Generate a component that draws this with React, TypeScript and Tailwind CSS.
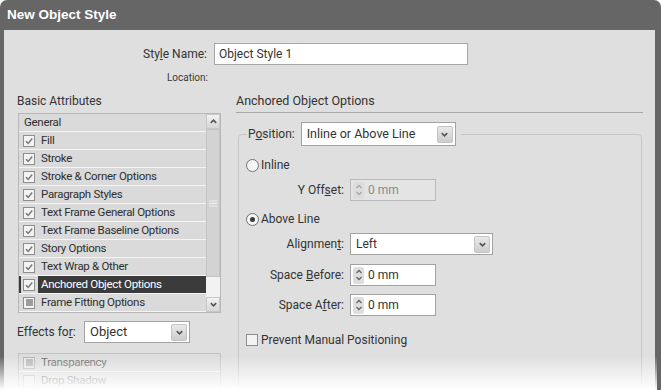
import type { ReactNode } from "react";

type CheckState = "on" | "off" | "mixed";

function Check({ state, dim = false }: { state: CheckState; dim?: boolean }) {
  return (
    <span
      className={`flex h-[12px] w-[12px] shrink-0 items-center justify-center border ${
        dim ? "border-[#b4b4b4] bg-[#e6e6e6]" : "border-[#8e8e8e] bg-[#f3f3f3]"
      }`}
    >
      {state === "on" && (
        <svg viewBox="0 0 10 10" className="h-[10px] w-[10px]">
          <path d="M2 5.2 L4.2 7.4 L8.2 2.6" fill="none" stroke="#7c7c7c" strokeWidth="1.6" />
        </svg>
      )}
      {state === "mixed" && <span className={`h-[7px] w-[7px] ${dim ? "bg-[#b8b8b8]" : "bg-[#9c9c9c]"}`} />}
    </span>
  );
}

function Radio({ on }: { on: boolean }) {
  return (
    <span className="flex h-[13px] w-[13px] shrink-0 items-center justify-center rounded-full border border-[#707070] bg-[#f4f4f4]">
      {on && <span className="h-[5px] w-[5px] rounded-full bg-[#3a3a3a]" />}
    </span>
  );
}

function Chevron({ up = false }: { up?: boolean }) {
  return (
    <svg viewBox="0 0 10 10" className="h-[9px] w-[9px]">
      <path
        d={up ? "M2 6.5 L5 3.5 L8 6.5" : "M2 3.5 L5 6.5 L8 3.5"}
        fill="none"
        stroke="#555"
        strokeWidth="1.8"
      />
    </svg>
  );
}

function Dropdown({ value, className }: { value: string; className: string }) {
  return (
    <div className={`flex items-center border border-[#a2a2a2] bg-white pl-[5px] pr-[2px] ${className}`}>
      <span className="flex-1 truncate">{value}</span>
      <span className="flex h-[17px] w-[16px] items-center justify-center rounded-[2px] border border-[#c4c4c4] bg-linear-to-b from-[#e9e9e9] to-[#cdcdcd]">
        <Chevron />
      </span>
    </div>
  );
}

function Spinner({ value, disabled = false }: { value: string; disabled?: boolean }) {
  return (
    <div
      className={`flex h-[22px] w-[86px] items-center border ${
        disabled ? "border-[#b9b9b9] bg-[#e4e4e4] text-[#8a8a8a]" : "border-[#a2a2a2] bg-white"
      }`}
    >
      <span
        className={`ml-[2px] flex h-[17px] w-[11px] flex-col items-center justify-center rounded-[2px] ${
          disabled ? "bg-[#dcdcdc]" : "bg-[#dedede]"
        }`}
      >
        <svg viewBox="0 0 8 14" className="h-[14px] w-[8px]">
          <path d="M1.5 5 L4 2.5 L6.5 5" fill="none" stroke={disabled ? "#aaa" : "#666"} strokeWidth="1.3" />
          <path d="M1.5 9 L4 11.5 L6.5 9" fill="none" stroke={disabled ? "#aaa" : "#666"} strokeWidth="1.3" />
        </svg>
      </span>
      <span className="pl-[4px]">{value}</span>
    </div>
  );
}

function Field({ label, children }: { label: ReactNode; children: ReactNode }) {
  return (
    <div className="flex items-center gap-[6px]">
      <span className="w-[98px] text-right">{label}</span>
      {children}
    </div>
  );
}

const rows: { name: string; state: CheckState | null }[] = [
  { name: "General", state: null },
  { name: "Fill", state: "on" },
  { name: "Stroke", state: "on" },
  { name: "Stroke & Corner Options", state: "on" },
  { name: "Paragraph Styles", state: "on" },
  { name: "Text Frame General Options", state: "on" },
  { name: "Text Frame Baseline Options", state: "on" },
  { name: "Story Options", state: "on" },
  { name: "Text Wrap & Other", state: "on" },
  { name: "Anchored Object Options", state: "on" },
  { name: "Frame Fitting Options", state: "mixed" },
];

export default function App() {
  return (
    <div className="relative h-[390px] w-[661px] overflow-hidden bg-white font-['Roboto',sans-serif] text-[12px] text-[#333]">
      <div className="flex h-full flex-col rounded-t-[7px] bg-[#666] pl-[4px] pr-[6px]">
        {/* Title bar */}
        <div className="flex h-[30px] shrink-0 items-center pl-[3px] font-['Liberation_Sans',sans-serif] text-[13.5px] font-bold text-white">
          New Object Style
        </div>

        {/* Body */}
        <div className="flex-1 bg-[#dfdfdf] pt-[13px]">
          <div className="flex items-center gap-[7px]">
            <span className="w-[203px] text-right">
              Sty<span className="underline">l</span>e Name:
            </span>
            <div className="flex h-[22px] w-[254px] items-center border border-[#a6a6a6] bg-white pl-[4px]">
              Object Style 1
            </div>
          </div>
          <div className="mt-[6px] flex h-[12px] items-center">
            <span className="w-[204px] text-right text-[10px] text-[#3a3a3a]">Location:</span>
          </div>

          <div className="mt-[10px] flex gap-[15px] pl-[14px]">
            {/* Left column */}
            <div className="flex w-[203px] flex-col">
              <div className="-ml-px flex h-[16px] items-center">Basic Attributes</div>
              <div className="mt-[4px] flex h-[200px] whitespace-nowrap border border-[#b8b8b8] bg-[#dadada] text-[11.5px] tracking-[-0.3px] text-[#2e2e2e]">
                <div className="flex-1">
                  {rows.map((r) => {
                    const sel = r.name === "Anchored Object Options";
                    return (
                      <div key={r.name} className="flex h-[18px] items-stretch border-b border-[#f4f4f4]">
                        <span className={`w-[2px] ${sel ? "bg-[#3a3a3a]" : ""}`} />
                        {r.state ? (
                          <>
                            <span className="flex items-center pl-[2px]">
                              <Check state={r.state} />
                            </span>
                            <span
                              className={`ml-[3px] flex flex-1 items-center pl-[3px] ${
                                sel ? "bg-[#3b3b3b] text-white" : ""
                              }`}
                            >
                              {r.name}
                            </span>
                          </>
                        ) : (
                          <span className="flex items-center pl-[3px]">{r.name}</span>
                        )}
                      </div>
                    );
                  })}
                </div>
                {/* Scrollbar */}
                <div className="flex w-[14px] flex-col bg-[#f2f2f2]">
                  <span className="flex h-[15px] items-center justify-center border border-[#c8c8c8] bg-linear-to-b from-[#f3f3f3] to-[#d6d6d6]">
                    <Chevron up />
                  </span>
                  <span className="flex h-[148px] items-center justify-center border border-[#c4c4c4] bg-[#d3d3d3]">
                    <svg viewBox="0 0 8 7" className="h-[7px] w-[8px]">
                      <path d="M0 1h8M0 3.5h8M0 6h8" stroke="#f0f0f0" strokeWidth="1" />
                    </svg>
                  </span>
                  <span className="flex-1" />
                  <span className="flex h-[15px] items-center justify-center border border-[#c8c8c8] bg-linear-to-b from-[#f3f3f3] to-[#d6d6d6]">
                    <Chevron />
                  </span>
                </div>
              </div>

              <div className="mt-[8px] flex h-[22px] items-center">
                <span className="-ml-px w-[67px]">
                  Effects fo<span className="underline">r</span>:
                </span>
                <Dropdown value="Object" className="h-[22px] w-[106px] text-[13px]" />
              </div>

              <div className="mt-[10px] whitespace-nowrap border border-[#c4c4c4] bg-[#dcdcdc] text-[11.5px] tracking-[-0.3px] text-[#6a6a6a]">
                <div className="flex h-[18px] items-center gap-[6px] border-b border-[#f0f0f0] pl-[4px]">
                  <Check state="mixed" dim />
                  Transparency
                </div>
                <div className="flex h-[18px] items-center gap-[6px] pl-[4px]">
                  <Check state="off" dim />
                  Drop Shadow
                </div>
              </div>
            </div>

            {/* Right column */}
            <div className="flex w-[407px] flex-col">
              <div className="flex h-[20px] items-start border-b border-[#a8a8a8] text-[12.5px]">
                <span className="leading-[16px]">Anchored Object Options</span>
              </div>
              <fieldset className="ml-[2px] mt-[9px] h-[290px] w-[404px] rounded-[4px] border border-[#c6c6c6] pl-[7px]">
                <legend className="ml-[1px] px-[1px]">
                  <div className="flex items-center gap-[6px] pr-[4px]">
                    <span>
                      P<span className="underline">o</span>sition:
                    </span>
                    <Dropdown value="Inline or Above Line" className="h-[24px] w-[155px] text-[12.5px]" />
                  </div>
                </legend>

                <div className="mt-[11px] flex h-[16px] items-center gap-[2px]">
                  <Radio on={false} />
                  Inline
                </div>
                <div className="mt-[6px]">
                  <Field
                    label={
                      <>
                        Y Off<span className="underline">s</span>et:
                      </>
                    }
                  >
                    <Spinner value="0 mm" disabled />
                  </Field>
                </div>
                <div className="mt-[10px] flex h-[16px] items-center gap-[2px]">
                  <Radio on />
                  Above Line
                </div>
                <div className="mt-[6px]">
                  <Field
                    label={
                      <>
                        Alignmen<span className="underline">t</span>:
                      </>
                    }
                  >
                    <Dropdown value="Left" className="h-[22px] w-[143px]" />
                  </Field>
                </div>
                <div className="mt-[9px]">
                  <Field
                    label={
                      <>
                        Space <span className="underline">B</span>efore:
                      </>
                    }
                  >
                    <Spinner value="0 mm" />
                  </Field>
                </div>
                <div className="mt-[8px]">
                  <Field
                    label={
                      <>
                        Space A<span className="underline">f</span>ter:
                      </>
                    }
                  >
                    <Spinner value="0 mm" />
                  </Field>
                </div>
                <div className="mt-[17px] flex h-[14px] items-center gap-[3px]">
                  <Check state="off" />
                  Prevent Manual Positioning
                </div>
              </fieldset>
            </div>
          </div>
        </div>
      </div>

      {/* bottom fade */}
      <div className="pointer-events-none absolute bottom-0 left-0 right-[4px] h-[34px] bg-linear-to-b from-white/0 to-white" />
    </div>
  );
}
